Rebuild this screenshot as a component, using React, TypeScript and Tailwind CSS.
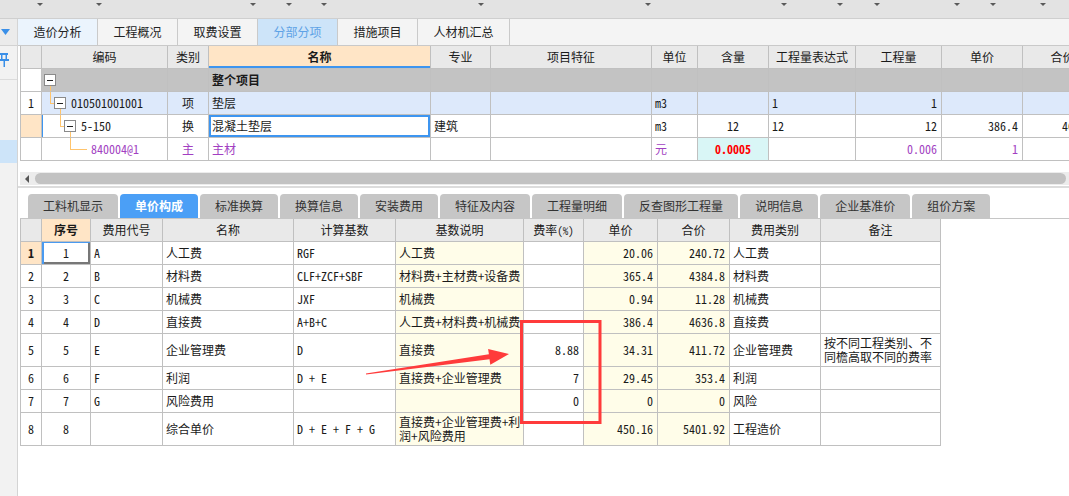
import React from "react";

const F = "font-['Noto_Sans_CJK_SC','Noto_Sans',sans-serif]";
const M = "font-['Noto_Sans_Mono_CJK_SC','Liberation_Mono',monospace]";

const CELL =
  "shrink-0 h-full border-r border-b border-[#c0c0c0] flex items-center overflow-hidden whitespace-nowrap text-[12px] text-[#1a1a1a]";
const L = "justify-start pl-[3px]";
const C = "justify-center";
const R = "justify-end pr-[4px]";

const UW = [
  "w-[21px]",
  "w-[126px]",
  "w-[41px]",
  "w-[222px]",
  "w-[60px]",
  "w-[161px]",
  "w-[46px]",
  "w-[71px]",
  "w-[87px]",
  "w-[86px]",
  "w-[81px]",
  "w-[80px]",
];

const BW = [
  "w-[21px]",
  "w-[49px]",
  "w-[72px]",
  "w-[131px]",
  "w-[102px]",
  "w-[128px]",
  "w-[60px]",
  "w-[74px]",
  "w-[72px]",
  "w-[91px]",
  "w-[120px]",
];

function Tri({ ml }: { ml: string }) {
  return (
    <span
      className={`${ml} w-0 h-0 border-l-[3px] border-r-[3px] border-t-[3px] border-l-transparent border-r-transparent border-t-[#5a5a5a]`}
    />
  );
}

function Box({ left }: { left: string }) {
  return (
    <span
      className={`absolute ${left} top-[5px] w-[12px] h-[12px] border border-[#8a8a8a] bg-white flex items-center justify-center`}
    >
      <span className="w-[6px] h-[1px] bg-[#222]" />
    </span>
  );
}

const LINE = "absolute bg-[#ffc46c]";

function TopTabs() {
  const tabs = [
    { t: "造价分析", w: "w-[80px]", c: "bg-[#ebf4fd] text-[#222]" },
    { t: "工程概况", w: "w-[80px]", c: "text-[#222]" },
    { t: "取费设置", w: "w-[80px]", c: "text-[#222]" },
    { t: "分部分项", w: "w-[80px]", c: "bg-[#cde4f9] text-[#5ea2e6]" },
    { t: "措施项目", w: "w-[80px]", c: "text-[#222]" },
    { t: "人材机汇总", w: "w-[92px]", c: "text-[#222]" },
  ];
  return (
    <div className="h-[27px] shrink-0 flex bg-[#f4f4f4] border-b border-[#c9c9c9]">
      {tabs.map((x) => (
        <div
          key={x.t}
          className={`${x.w} ${x.c} h-full border-r border-[#cacaca] flex items-center justify-center text-[12px]`}
        >
          {x.t}
        </div>
      ))}
    </div>
  );
}

function UpperGrid() {
  const head = ["", "编码", "类别", "名称", "专业", "项目特征", "单位", "含量", "工程量表达式", "工程量", "单价", "合价"];
  return (
    <div className="ml-[2px] border-l border-[#c0c0c0] w-max">
      {/* header */}
      <div className="flex h-[23px]">
        {head.map((h, i) => (
          <div
            key={i}
            className={`${CELL} ${UW[i]} ${C} ${
              i === 3
                ? "bg-[#ffe5c6] font-bold shadow-[inset_0_-2px_0_#3d95f0]"
                : "bg-[#e9e9e9]"
            }`}
          >
            {h}
          </div>
        ))}
      </div>
      {/* row 0 : 整个项目 */}
      <div className="flex h-[23px]">
        <div className={`${CELL} ${UW[0]} bg-white`} />
        <div className={`${CELL} ${UW[1]} bg-[#c3c3c3] relative`}>
          <Box left="left-[2px]" />
          <span className={`${LINE} left-[8px] top-[17px] w-[1px] h-[7px]`} />
        </div>
        <div className={`${CELL} ${UW[2]} bg-[#c3c3c3]`} />
        <div className={`${CELL} ${UW[3]} bg-[#c3c3c3] ${L} font-bold`}>整个项目</div>
        {UW.slice(4).map((w, i) => (
          <div key={i} className={`${CELL} ${w} bg-[#c3c3c3]`} />
        ))}
      </div>
      {/* row 1 */}
      <div className="flex h-[23px]">
        <div className={`${CELL} ${UW[0]} bg-white ${C} ${M}`}>1</div>
        <div className={`${CELL} ${UW[1]} bg-[#dde9fb] relative pl-[29px] ${M}`}>
          <span className={`${LINE} left-[8px] top-[-1px] w-[1px] h-[12px]`} />
          <span className={`${LINE} left-[8px] top-[11px] w-[4px] h-[1px]`} />
          <Box left="left-[12px]" />
          <span className={`${LINE} left-[18px] top-[17px] w-[1px] h-[7px]`} />
          010501001001
        </div>
        <div className={`${CELL} ${UW[2]} bg-[#dde9fb] ${C}`}>项</div>
        <div className={`${CELL} ${UW[3]} bg-[#dde9fb] ${L}`}>垫层</div>
        <div className={`${CELL} ${UW[4]} bg-[#dde9fb]`} />
        <div className={`${CELL} ${UW[5]} bg-[#dde9fb]`} />
        <div className={`${CELL} ${UW[6]} bg-[#dde9fb] ${L} ${M}`}>m3</div>
        <div className={`${CELL} ${UW[7]} bg-[#dde9fb]`} />
        <div className={`${CELL} ${UW[8]} bg-[#dde9fb] ${L} ${M}`}>1</div>
        <div className={`${CELL} ${UW[9]} bg-[#dde9fb] ${R} ${M}`}>1</div>
        <div className={`${CELL} ${UW[10]} bg-[#dde9fb]`} />
        <div className={`${CELL} ${UW[11]} bg-[#dde9fb]`} />
      </div>
      {/* row 2 */}
      <div className="flex h-[23px]">
        <div className={`${CELL} ${UW[0]} bg-[#ffe5c6]`} />
        <div className={`${CELL} ${UW[1]} bg-white relative pl-[39px] ${M}`}>
          <span className="absolute left-[-2px] top-[-1px] w-[3px] h-[24px] bg-[#3d95f0]" />
          <span className={`${LINE} left-[18px] top-[-1px] w-[1px] h-[12px]`} />
          <span className={`${LINE} left-[18px] top-[11px] w-[4px] h-[1px]`} />
          <Box left="left-[22px]" />
          <span className={`${LINE} left-[28px] top-[17px] w-[1px] h-[7px]`} />
          5-150
        </div>
        <div className={`${CELL} ${UW[2]} bg-white ${C}`}>换</div>
        <div className={`${CELL} ${UW[3]} bg-white ${L} shadow-[inset_0_0_0_2px_#3d95f0]`}>混凝土垫层</div>
        <div className={`${CELL} ${UW[4]} bg-white ${L}`}>建筑</div>
        <div className={`${CELL} ${UW[5]} bg-white`} />
        <div className={`${CELL} ${UW[6]} bg-white ${L} ${M}`}>m3</div>
        <div className={`${CELL} ${UW[7]} bg-white ${C} ${M}`}>12</div>
        <div className={`${CELL} ${UW[8]} bg-white ${L} ${M}`}>12</div>
        <div className={`${CELL} ${UW[9]} bg-white ${R} ${M}`}>12</div>
        <div className={`${CELL} ${UW[10]} bg-white ${R} ${M}`}>386.4</div>
        <div className={`${CELL} ${UW[11]} bg-white ${R} ${M}`}>4636.8</div>
      </div>
      {/* row 3 */}
      <div className="flex h-[23px]">
        <div className={`${CELL} ${UW[0]} bg-white`} />
        <div className={`${CELL} ${UW[1]} bg-white relative pl-[49px] ${M} text-[#a23fc2]`}>
          <span className={`${LINE} left-[28px] top-[-1px] w-[1px] h-[12px]`} />
          <span className={`${LINE} left-[28px] top-[11px] w-[17px] h-[1px]`} />
          840004@1
        </div>
        <div className={`${CELL} ${UW[2]} bg-white ${C} text-[#a23fc2]`}>主</div>
        <div className={`${CELL} ${UW[3]} bg-white ${L} text-[#a23fc2]`}>主材</div>
        <div className={`${CELL} ${UW[4]} bg-white`} />
        <div className={`${CELL} ${UW[5]} bg-white`} />
        <div className={`${CELL} ${UW[6]} bg-white ${L} text-[#a23fc2]`}>元</div>
        <div className={`${CELL} ${UW[7]} bg-[#d9f6f6] ${C} ${M} text-[#ff0000] font-bold`}>0.0005</div>
        <div className={`${CELL} ${UW[8]} bg-white`} />
        <div className={`${CELL} ${UW[9]} bg-white ${R} ${M} text-[#a23fc2]`}>0.006</div>
        <div className={`${CELL} ${UW[10]} bg-white ${R} ${M} text-[#a23fc2]`}>1</div>
        <div className={`${CELL} ${UW[11]} bg-white`} />
      </div>
    </div>
  );
}

function Scrollbar() {
  return (
    <div className="ml-[2px] h-[13px] shrink-0 bg-[#ececec] flex items-center">
      <span className="ml-[5px] w-0 h-0 border-t-[4px] border-b-[4px] border-r-[4px] border-t-transparent border-b-transparent border-r-[#555]" />
      <div className="ml-[6px] mr-[3px] flex-1 h-[11px] rounded-full bg-[#c2c2c2]" />
    </div>
  );
}

function BottomTabs() {
  const tabs = [
    "工料机显示",
    "单价构成",
    "标准换算",
    "换算信息",
    "安装费用",
    "特征及内容",
    "工程量明细",
    "反查图形工程量",
    "说明信息",
    "企业基准价",
    "组价方案",
  ];
  return (
    <div className="ml-[2px] pl-[8px] flex items-end gap-[2px] border-b border-[#c6c6c6] h-[25px] shrink-0">
      {tabs.map((t) => (
        <div
          key={t}
          className={`h-[24px] px-[15px] rounded-t-[4px] flex items-center text-[12px] ${
            t === "单价构成" ? "bg-[#4b9ff6] text-white font-bold" : "bg-[#c6c6c6] text-[#333]"
          }`}
        >
          {t}
        </div>
      ))}
    </div>
  );
}

type BRow = {
  n: string;
  code: string;
  name: string;
  base: string;
  desc: React.ReactNode;
  rate: string;
  price: string;
  total: string;
  cat: string;
  note: React.ReactNode;
  tall?: boolean;
};

const rows: BRow[] = [
  { n: "1", code: "A", name: "人工费", base: "RGF", desc: "人工费", rate: "", price: "20.06", total: "240.72", cat: "人工费", note: "" },
  { n: "2", code: "B", name: "材料费", base: "CLF+ZCF+SBF", desc: "材料费+主材费+设备费", rate: "", price: "365.4", total: "4384.8", cat: "材料费", note: "" },
  { n: "3", code: "C", name: "机械费", base: "JXF", desc: "机械费", rate: "", price: "0.94", total: "11.28", cat: "机械费", note: "" },
  { n: "4", code: "D", name: "直接费", base: "A+B+C", desc: "人工费+材料费+机械费", rate: "", price: "386.4", total: "4636.8", cat: "直接费", note: "" },
  {
    n: "5",
    code: "E",
    name: "企业管理费",
    base: "D",
    desc: "直接费",
    rate: "8.88",
    price: "34.31",
    total: "411.72",
    cat: "企业管理费",
    note: (
      <>
        按不同工程类别、不
        <br />
        同檐高取不同的费率
      </>
    ),
    tall: true,
  },
  { n: "6", code: "F", name: "利润", base: "D + E", desc: "直接费+企业管理费", rate: "7", price: "29.45", total: "353.4", cat: "利润", note: "" },
  { n: "7", code: "G", name: "风险费用", base: "", desc: "", rate: "0", price: "0", total: "0", cat: "风险", note: "" },
  {
    n: "8",
    code: "",
    name: "综合单价",
    base: "D + E + F + G",
    desc: (
      <>
        直接费+企业管理费+利
        <br />
        润+风险费用
      </>
    ),
    rate: "",
    price: "450.16",
    total: "5401.92",
    cat: "工程造价",
    note: "",
    tall: true,
  },
];

function BottomGrid() {
  const head = ["", "序号", "费用代号", "名称", "计算基数", "基数说明", "费率(%)", "单价", "合价", "费用类别", "备注"];
  const Y = "bg-[#fffde9]";
  return (
    <div className="ml-[2px] border-l border-[#c0c0c0] w-max">
      <div className="flex h-[23px]">
        {head.map((h, i) => (
          <div
            key={i}
            className={`${CELL} ${BW[i]} ${C} ${i === 1 ? "bg-[#ffe5c6] font-bold" : "bg-[#e9e9e9]"}`}
          >
            {i === 6 ? (
              <>
                费率<span className={`${M} text-[11px]`}>(%)</span>
              </>
            ) : (
              h
            )}
          </div>
        ))}
      </div>
      {rows.map((r, idx) => {
        const first = idx === 0;
        return (
          <div key={r.n} className={`flex ${r.tall ? "h-[33px]" : "h-[23px]"}`}>
            <div className={`${CELL} ${BW[0]} ${C} ${M} ${first ? "bg-[#ffe5c6] font-bold" : "bg-white"}`}>{r.n}</div>
            <div
              className={`${CELL} ${BW[1]} ${C} ${M} bg-white ${
                first ? "shadow-[inset_2px_1px_0_#4a9af0,inset_-2px_-2px_0_#777]" : ""
              }`}
            >
              {r.n}
            </div>
            <div className={`${CELL} ${BW[2]} ${L} ${M} bg-white`}>{r.code}</div>
            <div className={`${CELL} ${BW[3]} ${L} bg-white`}>{r.name}</div>
            <div className={`${CELL} ${BW[4]} ${L} ${M} bg-white`}>{r.base}</div>
            <div className={`${CELL} ${BW[5]} ${L} ${Y} leading-[14px]`}>
              <span>{r.desc}</span>
            </div>
            <div className={`${CELL} ${BW[6]} ${R} ${M} bg-white`}>{r.rate}</div>
            <div className={`${CELL} ${BW[7]} ${R} ${M} ${Y}`}>{r.price}</div>
            <div className={`${CELL} ${BW[8]} ${R} ${M} ${Y}`}>{r.total}</div>
            <div className={`${CELL} ${BW[9]} ${L} bg-white`}>{r.cat}</div>
            <div className={`${CELL} ${BW[10]} ${L} bg-white leading-[14px]`}>
              <span>{r.note}</span>
            </div>
          </div>
        );
      })}
    </div>
  );
}

function LeftStrip() {
  return (
    <div className="w-[18px] shrink-0 h-full bg-[#f2f2f2] border-r border-[#d4d4d4] flex flex-col">
      <div className="h-[27px] shrink-0 border-b border-[#d2d2d2] bg-[#ebebeb] flex items-center pl-[1px]">
        <svg width="9" height="6" viewBox="0 0 9 6">
          <path d="M0 0 L9 0 L4.5 6 Z" fill="#3a8fe8" />
        </svg>
      </div>
      <div className="h-[34px] shrink-0 border-b border-[#dcdcdc] pt-[7px]">
        <svg width="9" height="14" viewBox="0 0 9 14">
          <rect x="0" y="0" width="8" height="2" fill="#3a8fe8" />
          <rect x="1" y="2" width="1.5" height="4" fill="#3a8fe8" />
          <rect x="5.5" y="2" width="1.5" height="4" fill="#3a8fe8" />
          <rect x="0" y="6" width="9" height="2" fill="#3a8fe8" />
          <rect x="3.5" y="8" width="1.5" height="6" fill="#3a8fe8" />
        </svg>
      </div>
      <div className="h-[60px] shrink-0" />
      <div className="h-[23px] shrink-0 bg-[#cde4f9]" />
    </div>
  );
}

export default function App() {
  return (
    <div className={`relative w-[1069px] h-[496px] overflow-hidden bg-white ${F}`}>
      {/* top toolbar remnant */}
      <div className="h-[19px] bg-[#e3e3e3] border-b border-[#cfcfcf] flex items-start pt-[3px]">
        <Tri ml="ml-[37px]" />
        <Tri ml="ml-[53px]" />
        <Tri ml="ml-[148px]" />
        <Tri ml="ml-[30px]" />
        <Tri ml="ml-[29px]" />
        <Tri ml="ml-[151px]" />
        <Tri ml="ml-[161px]" />
        <Tri ml="ml-[130px]" />
        <Tri ml="ml-[50px]" />
        <Tri ml="ml-[31px]" />
        <Tri ml="ml-[74px]" />
        <Tri ml="ml-[30px]" />
        <Tri ml="ml-[44px]" />
      </div>
      <div className="flex h-[477px]">
        <LeftStrip />
        <div className="flex-1 min-w-0 flex flex-col overflow-hidden">
          <TopTabs />
          <UpperGrid />
          <div className="h-[11px] shrink-0" />
          <Scrollbar />
          <div className="mt-[1px] h-[2px] shrink-0 bg-[#dcdcdc]" />
          <div className="h-[6px] shrink-0" />
          <BottomTabs />
          <BottomGrid />
        </div>
      </div>
      {/* annotations */}
      <svg
        className="absolute left-0 top-0 pointer-events-none"
        width="1069"
        height="496"
        viewBox="0 0 1069 496"
      >
        <rect x="521.5" y="321.5" width="78.5" height="101" fill="none" stroke="#ff3b3b" strokeWidth="3" />
        <polygon
          points="365.9,373.4 488.9,354.3 488.1,348.9 509,354 490.3,364.7 489.5,359.3 366.1,374.6"
          fill="#ff3b3b"
        />
      </svg>
    </div>
  );
}
